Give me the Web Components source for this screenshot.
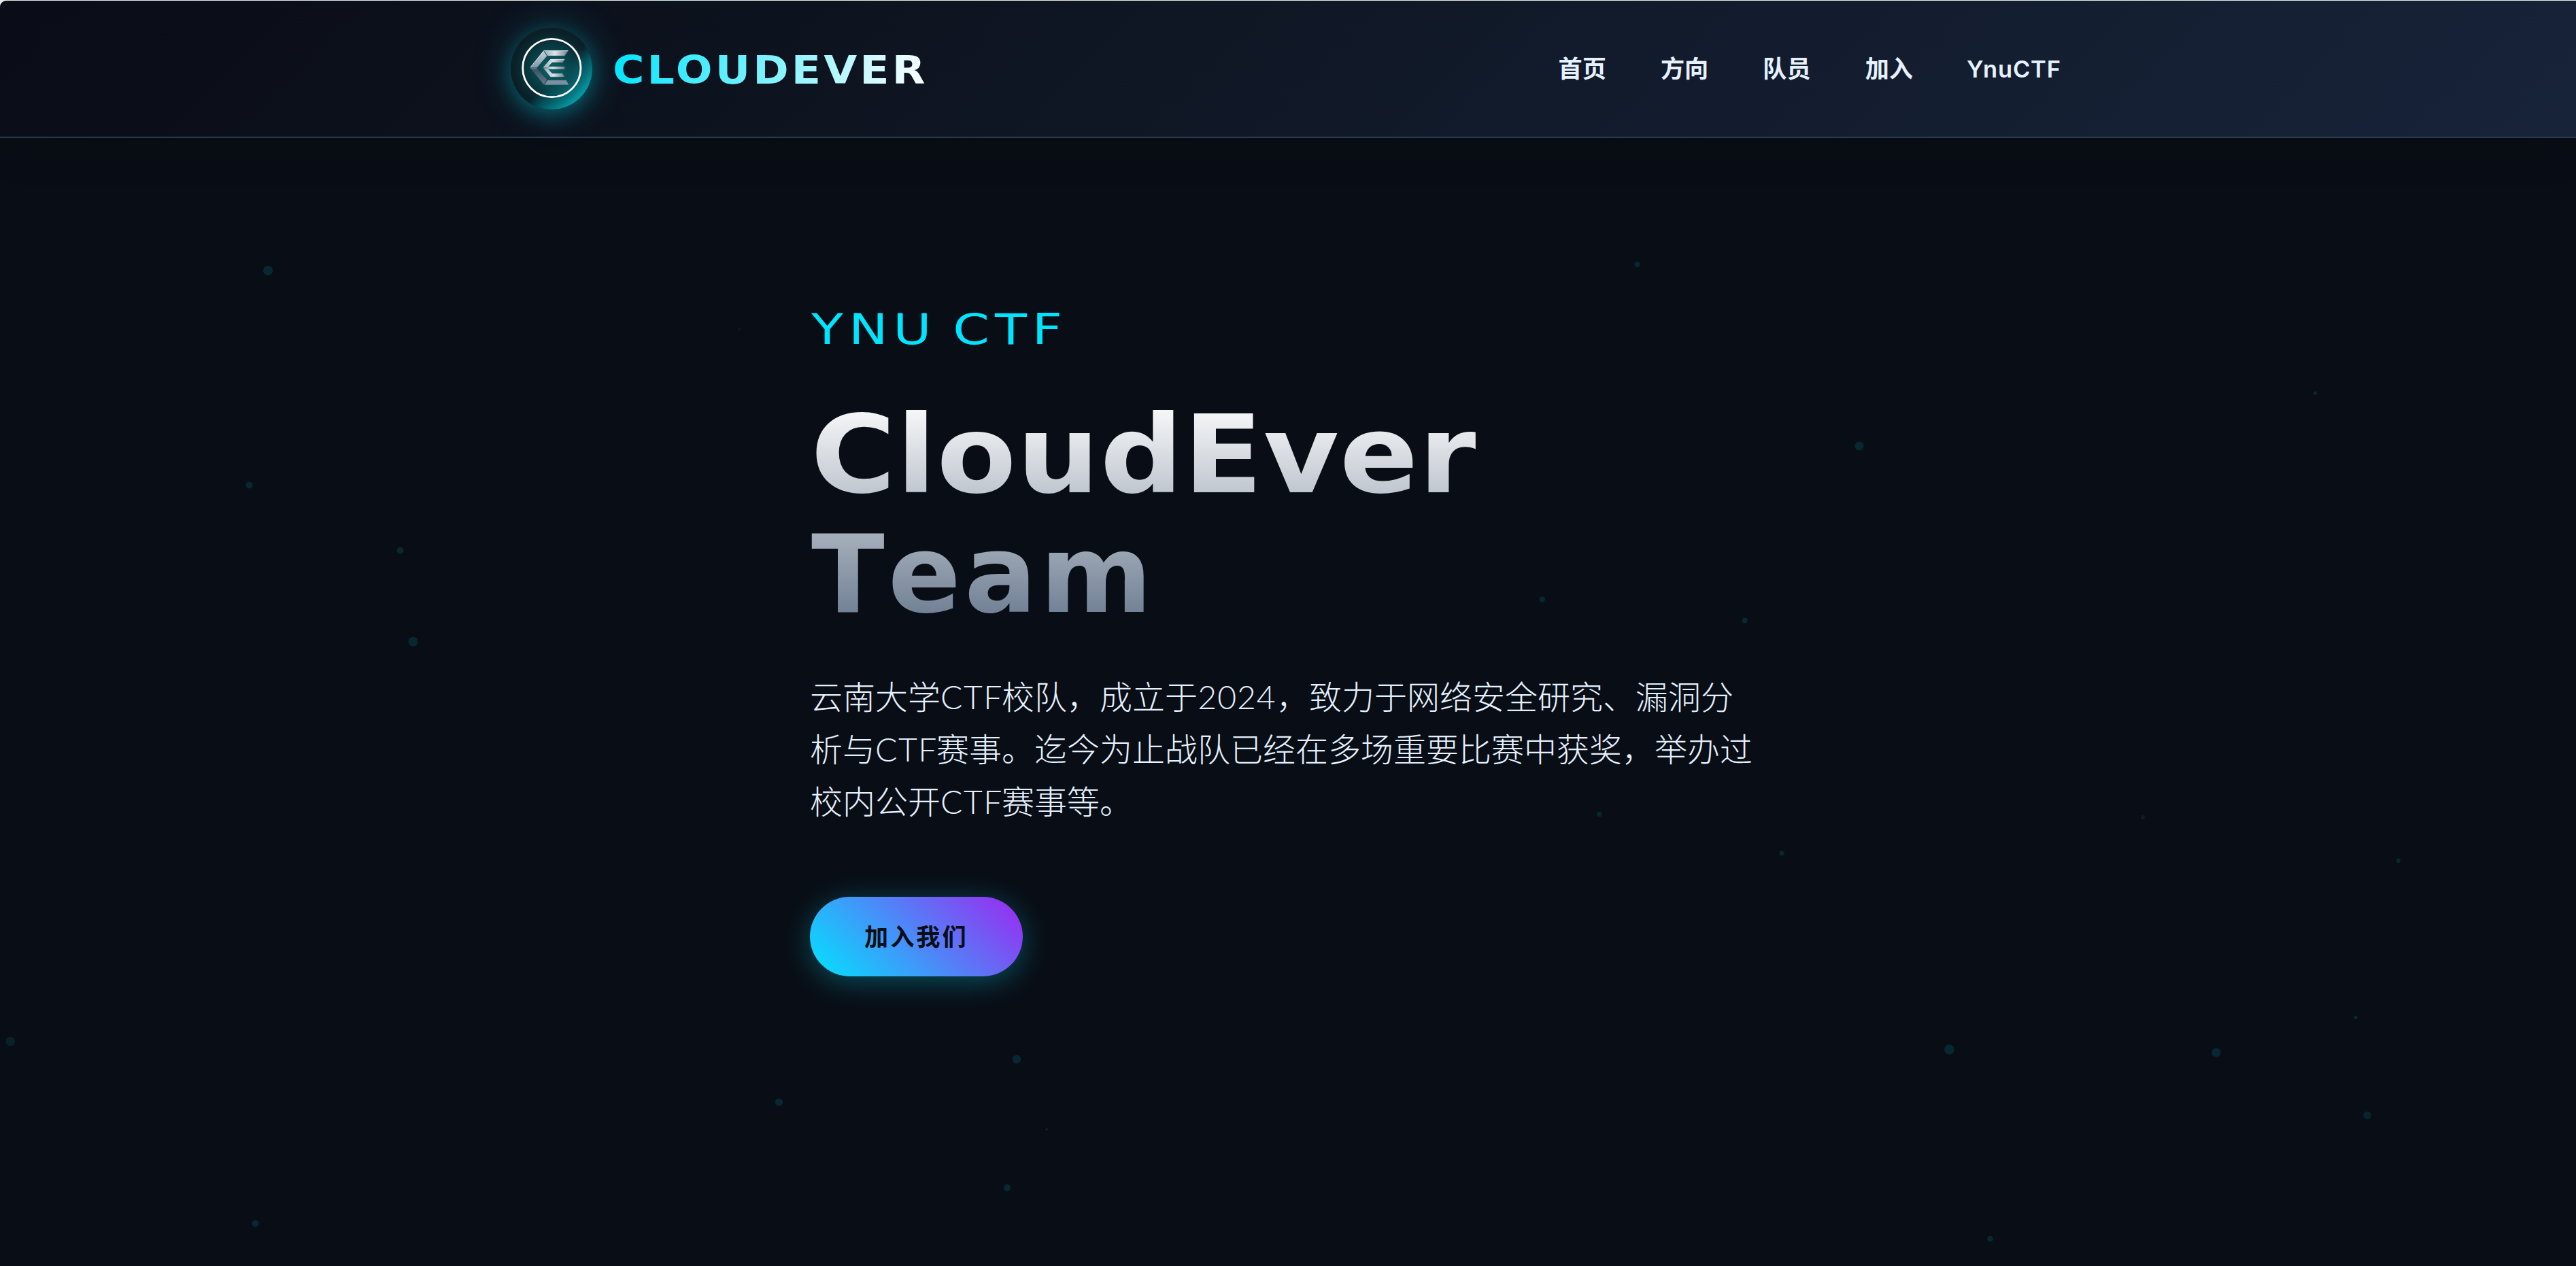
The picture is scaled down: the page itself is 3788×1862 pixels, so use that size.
<!DOCTYPE html>
<html lang="zh-CN">
<head>
<meta charset="utf-8">
<title>CloudEver Team</title>
<style>
  html, body { margin: 0; background: #0a0e17; }
  body {
    width: 3788px; height: 1862px; overflow: hidden;
    color: #e6f1ff;
    font-family: "Lato", "Noto Sans CJK SC", sans-serif;
  }
</style>
</head>
<body>
<ce-page>
  <ce-header slot="header">
    <ce-brand slot="brand">CLOUDEVER</ce-brand>
    <ce-nav-link>首页</ce-nav-link>
    <ce-nav-link>方向</ce-nav-link>
    <ce-nav-link>队员</ce-nav-link>
    <ce-nav-link>加入</ce-nav-link>
    <ce-nav-link latin>YnuCTF</ce-nav-link>
  </ce-header>
  <ce-particles slot="backdrop"></ce-particles>
  <ce-hero></ce-hero>
</ce-page>

<script>
const define = (name, html, ready) => {
  const template = document.createElement('template');
  template.innerHTML = html;
  customElements.define(name, class extends HTMLElement {
    constructor() {
      super();
      this.attachShadow({ mode: 'open' }).append(template.content.cloneNode(true));
      if (ready) ready(this.shadowRoot);
    }
  });
};

define('ce-page', `
  <style>
    :host { display: flex; flex-direction: column; position: relative; width: 3788px; height: 1862px; overflow: hidden; background: #090e16; }
    slot[name=header] { display: block; position: relative; z-index: 2; }
    main { flex: 1; position: relative; z-index: 1; }
  </style>
  <slot name="header"></slot>
  <slot name="backdrop"></slot>
  <main><slot></slot></main>`);

define('ce-header', `
  <style>
    :host { display: block; background: #e4efea; box-shadow: 0 8px 60px rgba(0,0,0,.2); padding-top: 1px; }
    header {
      box-sizing: border-box; height: 202px; padding: 0 757px 0 751px;
      display: flex; align-items: center; justify-content: space-between;
      background: linear-gradient(135deg, #0a0c17 0%, #0d131e 30%, #121b2c 62%, #172339 100%);
      border-bottom: 2px solid #2a3b4e; border-top-left-radius: 9px;
    }
    nav { display: flex; gap: 80px; }
  </style>
  <header><slot name="brand"></slot><nav><slot></slot></nav></header>`);

define('ce-brand', `
  <style>
    :host { display: flex; align-items: center; }
    .name {
      margin: 5px 0 0 30px; font: 700 57.6px/80px "DejaVu Sans", sans-serif; letter-spacing: 3.7px;
      transform: scaleX(1.1); transform-origin: 0 50%; white-space: nowrap;
      background: linear-gradient(100deg, #00e5ff, #fff); -webkit-background-clip: text; background-clip: text; color: transparent;
    }
  </style>
  <ce-emblem></ce-emblem><span class="name"><slot></slot></span>`);

define('ce-emblem', `
  <style>
    :host { display: block; width: 120px; height: 120px; border-radius: 50%; box-shadow: 0 0 60px rgba(0,229,255,.22), 0 8px 30px rgba(0,229,255,.28); }
    svg { display: block; width: 120px; height: 120px; }
  </style>
  <svg viewBox="153 123 360 360">
    <defs>
      <linearGradient id="d" x1="0" y1="0" x2="1" y2="1">
        <stop offset=".15" stop-color="#0a1f26"/><stop offset=".56" stop-color="#0a1f26"/><stop offset=".66" stop-color="#05525c"/><stop offset=".85" stop-color="#069aa5"/>
      </linearGradient>
      <radialGradient id="r"><stop offset="0" stop-color="#0a6d70" stop-opacity=".95"/><stop offset=".45" stop-color="#075056" stop-opacity=".75"/><stop offset="1" stop-color="#075056" stop-opacity="0"/></radialGradient>
      <linearGradient id="a" x1="0" y1="0" x2="1" y2="0"><stop offset="0" stop-color="#93a6b2"/><stop offset=".45" stop-color="#dbe6ec"/><stop offset="1" stop-color="#6b7f8c"/></linearGradient>
      <linearGradient id="b" x1="0" y1="0" x2="0" y2="1"><stop offset="0" stop-color="#c3d3dc"/><stop offset=".5" stop-color="#8296a5"/><stop offset=".55" stop-color="#3d5363"/><stop offset="1" stop-color="#64798a"/></linearGradient>
    </defs>
    <circle cx="333" cy="303" r="180" fill="url(#d)"/>
    <circle cx="333" cy="303" r="168" fill="url(#r)"/>
    <circle cx="334" cy="300" r="128" fill="none" stroke="#fff8f9" stroke-width="8.5"/>
    <g stroke-linejoin="round" stroke="#1d4a58" stroke-width="2">
      <path fill="url(#a)" d="M298 223H408L391 247H314Z"/>
      <path fill="url(#b)" d="M298 223L314 247L268 300L314 352L300 375L238 299Z"/>
      <path fill="#7890a1" d="M314 353H398L411 375H300Z"/>
      <path fill="url(#a)" d="M328 261H392L383 276H336L320 293H388L393 299L388 306H320L336 323H382L391 340H328L296 300Z"/>
    </g>
    <path d="M238 299H268M296 300H320M298 223L314 247M300 375L314 353" stroke="#23414f" stroke-width="2"/>
    <path d="M240 297L299 224H406M297 298L329 262H390" fill="none" stroke="#f2f8fb" stroke-width="2.5"/>
  </svg>`);

define('ce-nav-link', `
  <style>
    :host { display: block; box-sizing: border-box; height: 56px; font: 700 35.2px/51px "Noto Sans CJK SC", sans-serif; white-space: nowrap; color: #e6f1ff; }
    :host([latin]) { font: 600 34.5px/57px "Inter", sans-serif; width: 138px; letter-spacing: .8px; text-indent: -1px; }
  </style>
  <slot></slot>`);

define('ce-particles', `
  <style>
    :host { display: block; position: absolute; inset: 0; }
    svg { display: block; width: 100%; height: 100%; }
  </style>
  <svg viewBox="0 0 3788 1862" fill="#00e5ff" fill-opacity=".12"></svg>`, root => {
  const dots = [[394,398,7],[1087.5,484,2,.07],[366.5,713.5,5],[588.5,809.8,5],[607.5,943.7,7],[2407.5,389,4.2],
    [3404.5,578,2.6],[2734,656,6.5],[2267.8,881.6,4],[2565.7,912.5,4],[15.3,1531.7,6.8,.09],[1495,1558,6.2],
    [1145.5,1621,5.6],[1539,1661,2,.1],[1481,1747,5.1],[375.5,1799.5,5],[2352,1197.7,3.6],[3151,1202,3.1,.08],
    [2620,1255,3.6],[3526.7,1266,3.1],[3464,1496.5,2.6],[2866.4,1543.7,7.2],[3259,1548,6.6],[3481,1640.5,5.8,.1],[2926.5,1822,4.3]];
  const svg = root.querySelector('svg');
  for (const [x, y, r, o] of dots) {
    const c = document.createElementNS('http://www.w3.org/2000/svg', 'circle');
    c.setAttribute('cx', x); c.setAttribute('cy', y); c.setAttribute('r', r);
    if (o) c.setAttribute('fill-opacity', o);
    svg.append(c);
  }
});

define('ce-hero', `
  <style>
    :host { display: flex; flex-direction: column; align-items: flex-start; padding: 242px 1191px 0; }
    h2, h1, p { margin: 0; white-space: nowrap; }
    h2 { font: 400 63px/80px "DejaVu Sans", sans-serif; letter-spacing: 6.5px; word-spacing: -7px; color: #00e5ff; transform: scaleX(1.22); transform-origin: 0 50%; margin-left: 2px; }
    h1 { margin-top: 56px; font: 700 158px/176px "DejaVu Sans", sans-serif; font-kerning: none; }
    .line { display: block; width: max-content; transform-origin: 0 50%; -webkit-background-clip: text; background-clip: text; color: transparent; }
    .first { background-image: linear-gradient(180deg, #fff, #b2bac5); transform: scaleX(1.08); letter-spacing: .7px; margin-left: 1px; }
    .second { background-image: linear-gradient(180deg, #b2bac5, #64758b); letter-spacing: 5px; margin-left: 2px; }
    p { margin-top: 54px; font: 300 48px/76.8px "Lato", "Noto Sans CJK SC", sans-serif; color: #e6f1ff; }
    .w { display: inline-block; width: 90px; text-align: center; letter-spacing: 1.5px; }
    .n { display: inline-block; width: 116px; text-align: center; letter-spacing: 1px; }
    ce-button { margin-top: 102px; }
  </style>
  <h2>YNU CTF</h2>
  <h1><span class="line first">CloudEver</span><span class="line second">Team</span></h1>
  <p>云南大学<span class="w">CTF</span>校队，成立于<span class="n">2024</span>，致力于网络安全研究、漏洞分<br>析与<span class="w">CTF</span>赛事。迄今为止战队已经在多场重要比赛中获奖，举办过<br>校内公开<span class="w">CTF</span>赛事等。</p>
  <ce-button>加入我们</ce-button>`);

define('ce-button', `
  <style>
    :host {
      display: block; box-sizing: border-box; width: 313px; height: 117px; padding-left: 80px; border-radius: 60px;
      font: 700 35.2px/114px "Noto Sans CJK SC", sans-serif; letter-spacing: 3px; color: #0a0e17; white-space: nowrap;
      background: linear-gradient(45deg, #00e5ff, #9d27f0);
      box-shadow: 0 8px 40px rgba(0,229,255,.3);
    }
  </style>
  <slot></slot>`);
</script>
</body>
</html>
